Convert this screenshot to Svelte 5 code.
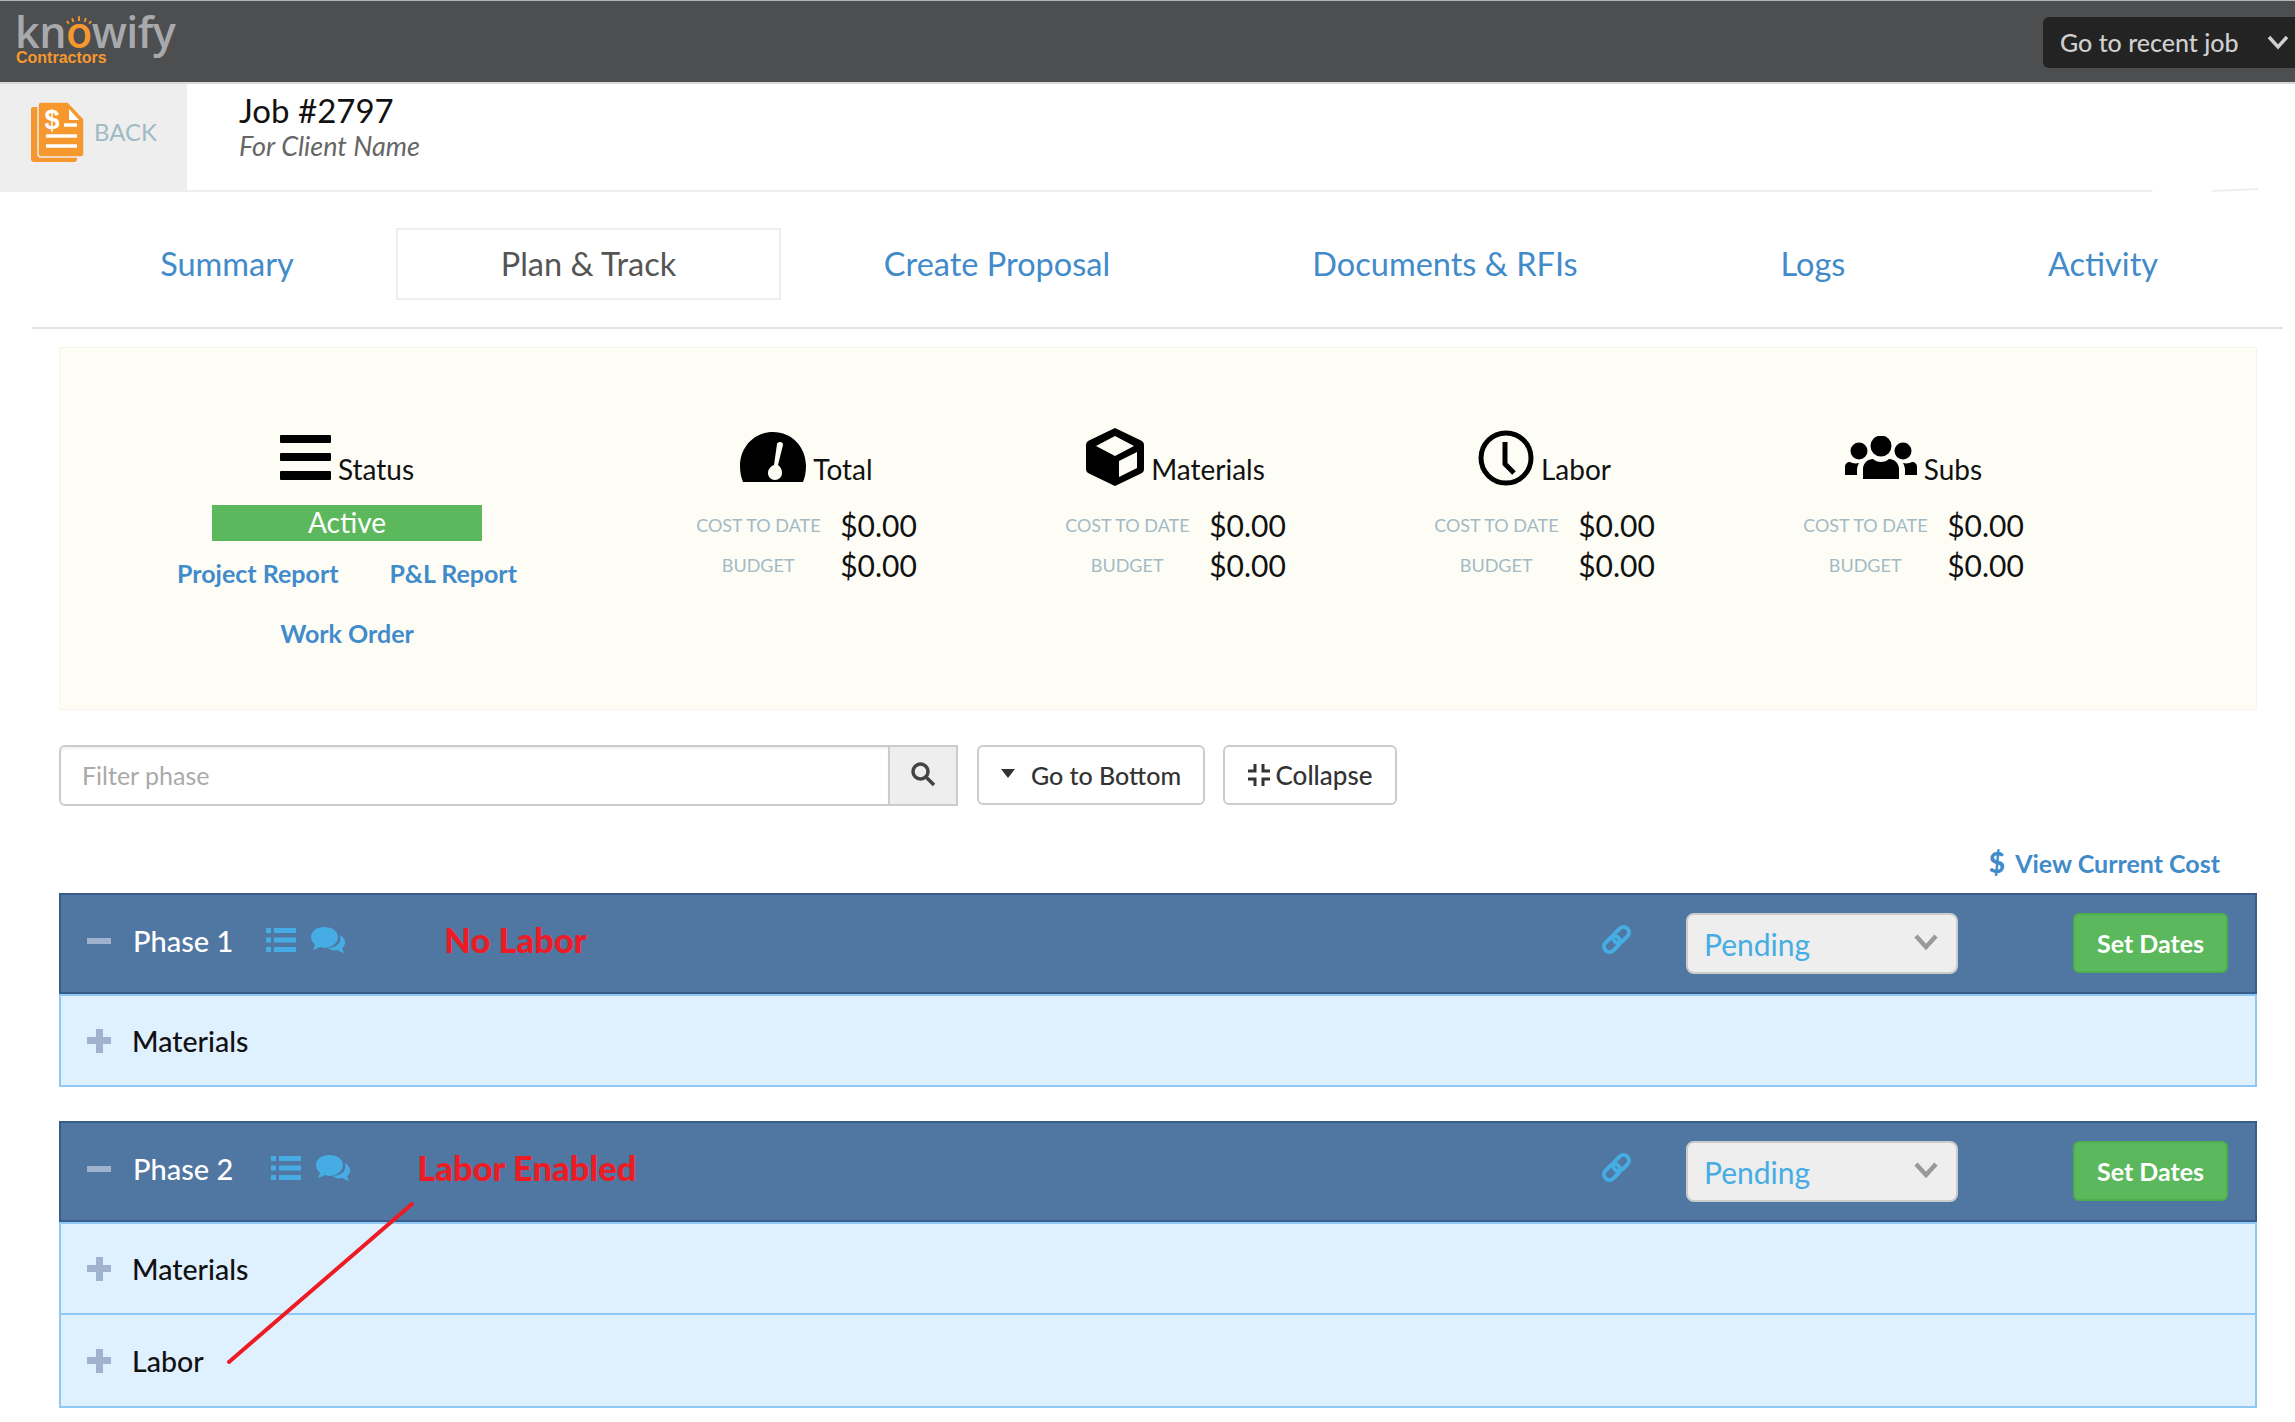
<script>
  const tabs = [
    { label: 'Summary' },
    { label: 'Plan & Track', active: true },
    { label: 'Create Proposal' },
    { label: 'Documents & RFIs' },
    { label: 'Logs' },
    { label: 'Activity' }
  ];

  const stats = [
    { id: 'total', label: 'Total' },
    { id: 'materials', label: 'Materials' },
    { id: 'labor', label: 'Labor' },
    { id: 'subs', label: 'Subs' }
  ];

  const phases = [
    { name: 'Phase 1', note: 'No Labor', rows: ['Materials'] },
    { name: 'Phase 2', note: 'Labor Enabled', rows: ['Materials', 'Labor'] }
  ];
</script>

<div class="page">
  <header class="topbar">
    <div class="logo">
      <div class="logo-word">kn<span class="o">o<svg class="rays" viewBox="0 0 28 10" aria-hidden="true">
        <path d="M3 9 1 6M8 7 6.500 3M14 6V1M20 7l1.500-4M25 9l2-3" />
      </svg></span>wify</div>
      <div class="logo-sub">Contractors</div>
    </div>
    <button class="recent">
      Go to recent job
      <svg viewBox="0 0 24 16" aria-hidden="true"><path d="M3 3l9 10 9-10" /></svg>
    </button>
  </header>

  <div class="jobbar">
    <div class="back">
      <svg class="doc" viewBox="0 0 53 60" aria-hidden="true">
        <path class="doc-back" d="M2 5h6v49h38v3a3 3 0 0 1-3 3H3a3 3 0 0 1-3-3V7a2 2 0 0 1 2-2z" />
        <path class="doc-front" d="M10 0h27l16 17v35a3 3 0 0 1-3 3H10a3 3 0 0 1-3-3V3a3 3 0 0 1 3-3z" />
        <path class="doc-fold" d="M38 7v11h10z" />
        <text x="21" y="27" class="doc-dollar">$</text>
        <path class="doc-line" d="M33 23h13M15 34h31M15 44h31" />
      </svg>
      <span>BACK</span>
    </div>
    <div class="job-title">
      <div class="job-no">Job #2797</div>
      <div class="job-client">For Client Name</div>
    </div>
  </div>

  <nav class="tabs">
    {#each tabs as tab}
      <div class="tab" class:active={tab.active}>{tab.label}</div>
    {/each}
  </nav>

  <section class="summary">
    <div class="status">
      <div class="stat-head">
        <svg class="ic-bars" viewBox="0 0 51 45" aria-hidden="true">
          <rect width="51" height="8" rx="1" />
          <rect y="18" width="51" height="8" rx="1" />
          <rect y="36" width="51" height="9" rx="1" />
        </svg>
        <span>Status</span>
      </div>
      <div class="active-bar">Active</div>
      <div class="report-links">
        <a href="#project">Project Report</a>
        <a href="#pl">P&amp;L Report</a>
      </div>
      <a class="work-order" href="#work">Work Order</a>
    </div>

    {#each stats as stat}
      <div class="stat">
        <div class="stat-head">
          {#if stat.id === 'total'}
            <svg class="ic-total" viewBox="0 0 66 50" aria-hidden="true">
              <path fill-rule="evenodd" d="M33 0C14 0 0 15 0 34c0 6 1 11 3 16h60c2-5 3-10 3-16C66 15 52 0 33 0zM40 10c2 0 3 1 3 3l-5 20c3 2 4 5 4 8 0 4-3 7-7 7s-7-3-7-7c0-4 3-7 6-8l3-21c0-1 1-2 3-2z" />
            </svg>
          {:else if stat.id === 'materials'}
            <svg class="ic-materials" viewBox="0 0 58 58" aria-hidden="true">
              <path fill-rule="evenodd" d="M29 0 54 12c3 1 4 3 4 5v24c0 2-1 4-4 5L29 58 4 46c-3-1-4-3-4-5V17c0-2 1-4 4-5zM29 8 10 18l19 10 19-10zM51 24 33 33v16l18-9z" />
            </svg>
          {:else if stat.id === 'labor'}
            <svg class="ic-labor" viewBox="0 0 56 56" aria-hidden="true">
              <circle cx="28" cy="28" r="25" />
              <path d="M27 12v22l9 9" />
            </svg>
          {:else}
            <svg class="ic-subs" viewBox="0 0 72 43" aria-hidden="true">
              <circle cx="36" cy="10" r="10.500" />
              <circle cx="14" cy="15" r="8.500" />
              <circle cx="58" cy="15" r="8.500" />
              <path d="M18 43V33c0-6 5-10 10-10 2 2 5 3 8 3s6-1 8-3c5 0 10 4 10 10v10z" />
              <path d="M0 39v-8c0-3 2-5 5-5 2 1 5 2 9 1-1 2-2 4-2 7v5zM72 39v-8c0-3-2-5-5-5-2 1-5 2-9 1 1 2 2 4 2 7v5z" />
            </svg>
          {/if}
          <span>{stat.label}</span>
        </div>
        <div class="stat-rows">
          <div class="stat-label">COST TO DATE</div>
          <div class="stat-value">$0.00</div>
          <div class="stat-label">BUDGET</div>
          <div class="stat-value">$0.00</div>
        </div>
      </div>
    {/each}
  </section>

  <div class="toolbar">
    <div class="filter">
      <input type="text" placeholder="Filter phase" />
      <div class="filter-btn">
        <svg viewBox="0 0 26 26" aria-hidden="true">
          <circle cx="10.500" cy="10.500" r="7.500" />
          <path d="M16 16l8 8" />
        </svg>
      </div>
    </div>
    <button class="tool bottom"><span class="caret"></span>Go to Bottom</button>
    <button class="tool collapse">
      <svg viewBox="0 0 22 22" aria-hidden="true">
        <path d="M7 0v7H0M15 0v7h7M7 22v-7H0M15 22v-7h7" />
      </svg>
      Collapse
    </button>
  </div>

  <div class="cost-row">
    <a href="#cost"><b>$</b> View Current Cost</a>
  </div>

  {#each phases as phase}
    {@const wide = phase.rows.length > 1}
    <section class="phase">
      <div class="phase-head">
        <span class="minus"></span>
        <span class="phase-name">{phase.name}</span>
        <svg class="ic-list" class:wide viewBox="0 0 30 24" aria-hidden="true">
          <path d="M0 0h5v5H0zM8 0h22v5H8zM0 9.500h5v5H0zM8 9.500h22v5H8zM0 19h5v5H0zM8 19h22v5H8z" />
        </svg>
        <svg class="ic-chat" viewBox="0 0 34 26" aria-hidden="true">
          <path d="M13 0C6 0 0 4 0 10c0 3 2 6 4 8l-2 5c3-1 5-2 7-3 1 0 3 1 4 1 8 0 14-5 14-11S21 0 13 0z" />
          <path d="M29 8c3 2 5 4 5 7 0 3-1 5-3 6l2 5c-3-1-5-2-7-3-3 1-7 0-9-2 8 0 14-5 12-13z" />
        </svg>
        <span class="note" class:wide>{phase.note}</span>
        <svg class="ic-link" viewBox="0 0 32 32" aria-hidden="true">
          <rect x="14.500" y="2" width="11" height="18" rx="5.500" transform="rotate(45 20 11)" />
          <rect x="5.500" y="11" width="11" height="18" rx="5.500" transform="rotate(45 11 20)" />
        </svg>
        <div class="select">
          <span>Pending</span>
          <svg viewBox="0 0 26 18" aria-hidden="true"><path d="M3 3l10 11L23 3" /></svg>
        </div>
        <button class="dates">Set Dates</button>
      </div>
      {#each phase.rows as row}
        <div class="phase-row">
          <span class="plus"></span>
          <span>{row}</span>
        </div>
      {/each}
    </section>
  {/each}

  <!-- scribbled out in the original screenshot -->
  <svg class="redact" viewBox="0 0 160 110" aria-hidden="true">
    <path d="M4 6 40 1 120 3 160 6V96L100 102 60 104 14 98 6 60z" />
    <path class="redact-line" d="M72 91 118 89" />
  </svg>

  <!-- hand drawn arrow from the note to the labor row -->
  <svg class="arrow" viewBox="0 0 200 170" aria-hidden="true">
    <path d="M190 4 7 162" />
  </svg>
</div>

<style>
  :global(body) {
    margin: 0;
    background: #fff;
  }

  .page {
    position: relative;
    width: 2295px;
    height: 1422px;
    overflow: hidden;
    font-family: Lato, "Open Sans", sans-serif;
    color: #000;
  }

  .topbar {
    height: 81px;
    border-top: 1px solid #b5b5b5;
    border-bottom: 2px solid #d8d8d8;
    background: #4d4e50;
    display: flex;
    align-items: center;
    justify-content: space-between;
  }

  .logo {
    align-self: flex-start;
    margin: 12px 0 0 15px;
  }

  .logo-word {
    font-family: "Open Sans", sans-serif;
    font-size: 43px;
    font-weight: 600;
    line-height: 38px;
    letter-spacing: -0.5px;
    color: #a7a9ac;
  }

  .logo-word .o {
    position: relative;
    color: #f7982f;
  }

  .rays {
    position: absolute;
    left: 50%;
    top: 13px;
    width: 26px;
    height: 10px;
    margin-left: -13px;
    fill: none;
    stroke: #f7982f;
    stroke-width: 2;
  }

  .logo-sub {
    margin-left: 1px;
    font-family: "Liberation Sans", sans-serif;
    font-size: 16px;
    font-weight: 700;
    line-height: 14px;
    color: #f7982f;
  }

  .recent {
    width: 252px;
    height: 51px;
    margin-top: 1px;
    padding: 0 0 0 17px;
    border: 0;
    border-radius: 6px 0 0 6px;
    background: #232323;
    color: #cfcfcf;
    font: 500 25px Lato, sans-serif;
    text-align: left;
    display: flex;
    align-items: center;
    gap: 27px;
    white-space: nowrap;
  }

  .recent svg {
    width: 24px;
    height: 16px;
    flex: none;
    fill: none;
    stroke: #cfcfcf;
    stroke-width: 3.500;
  }

  .jobbar {
    height: 106px;
    border-bottom: 2px solid #eeeeee;
    display: flex;
  }

  .back {
    width: 187px;
    background: #eeeeee;
    display: flex;
    align-items: center;
    padding: 0 0 11px 31px;
    box-sizing: border-box;
    gap: 10px;
    color: #9fbac3;
    font-size: 24px;
  }

  .doc {
    width: 53px;
    height: 60px;
    flex: none;
  }

  .doc-back {
    fill: #f7982f;
  }

  .doc-front {
    fill: #f7982f;
    stroke: #eee;
    stroke-width: 1.500;
  }

  .doc-fold {
    fill: #fff;
  }

  .doc-dollar {
    fill: #fff;
    font: 700 27px "Liberation Sans", sans-serif;
    text-anchor: middle;
  }

  .doc-line {
    fill: none;
    stroke: #fff;
    stroke-width: 3.500;
  }

  .job-title {
    margin-left: 52px;
    padding-top: 7px;
  }

  .job-no {
    font-size: 33px;
    line-height: 38px;
    color: #111;
  }

  .job-client {
    margin-top: 1px;
    font-size: 27px;
    line-height: 32px;
    font-style: italic;
    color: #666;
  }

  .tabs {
    margin: 0 12px 0 32px;
    height: 137px;
    padding: 36px 0 0 26px;
    box-sizing: border-box;
    border-bottom: 2px solid #e2e2e2;
    display: grid;
    grid-template-columns: 338px 385px 432px 464px 272px 308px;
    align-items: start;
  }

  .tab {
    height: 72px;
    padding-bottom: 2px;
    display: flex;
    align-items: center;
    justify-content: center;
    font-size: 32.500px;
    color: #428bca;
    box-sizing: border-box;
  }

  .tab.active {
    color: #555;
    border: 2px solid #eeeeee;
  }

  .summary {
    margin: 18px 38px 0 59px;
    height: 363px;
    box-sizing: border-box;
    border: 1px solid #f6f3e7;
    background: #fdfdf6;
    display: grid;
    grid-template-columns: 562px repeat(4, 369px);
    padding-top: 80px;
  }

  .status {
    width: 340px;
    margin-left: 117px;
    display: flex;
    flex-direction: column;
    align-items: center;
  }

  .stat {
    display: flex;
    flex-direction: column;
    align-items: center;
  }

  .stat-head {
    height: 58px;
    display: flex;
    align-items: flex-end;
    justify-content: center;
    gap: 7px;
    font-size: 28px;
    line-height: 34px;
    color: #111;
  }

  .stat-head svg {
    display: block;
    flex: none;
  }

  .ic-bars {
    width: 51px;
    height: 45px;
    margin-bottom: 6px;
  }

  .ic-total {
    width: 66px;
    height: 50px;
    margin-bottom: 4px;
  }

  .ic-materials {
    width: 58px;
    height: 58px;
  }

  .ic-labor {
    width: 56px;
    height: 56px;
    fill: none;
    stroke: #000;
    stroke-width: 5;
  }

  .ic-subs {
    width: 72px;
    height: 43px;
    margin-bottom: 7px;
  }

  .active-bar {
    width: 270px;
    height: 36px;
    margin-top: 19px;
    background: #5cb85c;
    color: #fff;
    font-size: 28px;
    line-height: 35px;
    text-align: center;
  }

  .report-links {
    margin-top: 15px;
    width: 340px;
    display: flex;
    justify-content: space-between;
  }

  .report-links a,
  .work-order,
  .cost-row a {
    color: #428bca;
    font-size: 25px;
    font-weight: 700;
    line-height: 34px;
    text-decoration: none;
  }

  .work-order {
    margin-top: 26px;
  }

  .stat-rows {
    margin-top: 19px;
    display: grid;
    grid-template-columns: 124px auto;
    column-gap: 20px;
    grid-auto-rows: 40px;
    align-items: center;
  }

  .stat-label {
    font-size: 18px;
    text-align: center;
    white-space: nowrap;
    color: #a3bac5;
  }

  .stat-value {
    font-size: 30px;
    color: #111;
  }

  .toolbar {
    margin: 35px 0 0 59px;
    display: flex;
    align-items: flex-start;
    height: 61px;
  }

  .filter {
    display: flex;
    width: 899px;
    height: 61px;
    box-sizing: border-box;
    border: 2px solid #cccccc;
    border-radius: 6px 0 0 6px;
  }

  .filter input {
    flex: 1;
    min-width: 0;
    border: 0;
    outline: 0;
    padding: 0 21px 2px;
    background: #fff;
    border-radius: 6px 0 0 6px;
    box-shadow: inset 0 2px 2px rgba(0, 0, 0, 0.06);
    font: 25px Lato, sans-serif;
  }

  .filter input::placeholder {
    color: #aaa;
  }

  .filter-btn {
    width: 66px;
    border-left: 2px solid #cccccc;
    background: #eeeeee;
    display: flex;
    align-items: center;
    justify-content: center;
  }

  .filter-btn svg {
    width: 26px;
    height: 26px;
    margin-bottom: 4px;
    fill: none;
    stroke: #444;
    stroke-width: 3.500;
  }

  .tool {
    height: 60px;
    margin-left: 19px;
    box-sizing: border-box;
    border: 2px solid #cccccc;
    border-radius: 6px;
    background: #fff;
    color: #333;
    font: 500 25px Lato, sans-serif;
    display: flex;
    align-items: center;
    justify-content: center;
  }

  .bottom {
    width: 228px;
    gap: 16px;
  }

  .caret {
    border-top: 9px solid #333;
    border-left: 7px solid transparent;
    border-right: 7px solid transparent;
    margin-bottom: 3px;
  }

  .collapse {
    width: 174px;
    margin-left: 18px;
    gap: 6px;
    font-size: 26px;
  }

  .collapse svg {
    width: 22px;
    height: 22px;
    fill: none;
    stroke: #333;
    stroke-width: 3;
  }

  .cost-row {
    margin-top: 36px;
    padding-right: 75px;
    height: 40px;
    display: flex;
    justify-content: flex-end;
    align-items: center;
  }

  .cost-row b {
    font-size: 28px;
    margin-right: 5px;
  }

  .phase {
    margin: 11px 38px 0 59px;
  }

  .phase + .phase {
    margin-top: 34px;
  }

  .phase-head {
    height: 101px;
    box-sizing: border-box;
    border: 2px solid #385d8a;
    background: #5076a2;
    display: flex;
    align-items: flex-start;
    padding: 0 27px 0 26px;
  }

  .minus {
    width: 24px;
    height: 6px;
    margin-top: 43px;
    background: #9fb3cf;
    flex: none;
  }

  .phase-name {
    margin-left: 22px;
    margin-top: 28px;
    font-size: 29px;
    font-weight: 500;
    line-height: 36px;
    color: #fff;
  }

  .ic-list {
    width: 30px;
    height: 24px;
    margin: 33px 0 0 33px;
    fill: #45ade3;
    flex: none;
  }

  .ic-list.wide {
    margin-left: 38px;
  }

  .ic-chat {
    width: 34px;
    height: 26px;
    margin: 32px 0 0 15px;
    fill: #45ade3;
    flex: none;
  }

  .note {
    flex: 1;
    margin: 24px 0 0 99px;
    font-weight: 900;
    font-size: 34.500px;
    line-height: 42px;
    color: #ed1c24;
    white-space: nowrap;
  }

  .note.wide {
    margin-left: 67px;
  }

  .ic-link {
    width: 32px;
    height: 32px;
    margin-top: 29px;
    flex: none;
    fill: none;
    stroke: #45ade3;
    stroke-width: 4;
  }

  .select {
    width: 272px;
    height: 61px;
    margin: 18px 0 0 53px;
    flex: none;
    box-sizing: border-box;
    border: 2px solid #cccccc;
    border-radius: 8px;
    background: #eeeeee;
    color: #45ade3;
    font-size: 30px;
    display: flex;
    align-items: center;
    justify-content: space-between;
    padding: 0 17px 0 16px;
  }

  .select svg {
    width: 26px;
    height: 18px;
    margin-bottom: 4px;
    fill: none;
    stroke: #999;
    stroke-width: 4.500;
  }

  .dates {
    width: 155px;
    height: 60px;
    margin: 18px 0 0 115px;
    flex: none;
    border: 2px solid #4cae4c;
    border-radius: 6px;
    background: #5cb85c;
    color: #fff;
    font: 700 25px Lato, sans-serif;
    padding: 0;
  }

  .phase-row {
    height: 93px;
    box-sizing: border-box;
    border: 2px solid #90c8f4;
    border-top: 0;
    background: #dff0ff;
    display: flex;
    align-items: center;
    gap: 21px;
    padding-left: 26px;
    font-size: 28.500px;
    font-weight: 500;
    color: #111;
  }

  .phase-head + .phase-row {
    border-top: 2px solid #90c8f4;
  }

  .plus {
    width: 24px;
    height: 24px;
    flex: none;
    background:
      linear-gradient(#9fb3cf, #9fb3cf) center / 100% 7px no-repeat,
      linear-gradient(#9fb3cf, #9fb3cf) center / 7px 100% no-repeat;
  }

  .redact {
    position: absolute;
    left: 2140px;
    top: 100px;
    width: 160px;
    height: 110px;
    fill: #fff;
  }

  .redact-line {
    fill: none;
    stroke: #eeeeee;
    stroke-width: 2;
  }

  .arrow {
    position: absolute;
    left: 222px;
    top: 1200px;
    width: 200px;
    height: 170px;
    fill: none;
    stroke: #ed1c24;
    stroke-width: 4;
    stroke-linecap: round;
  }
</style>
